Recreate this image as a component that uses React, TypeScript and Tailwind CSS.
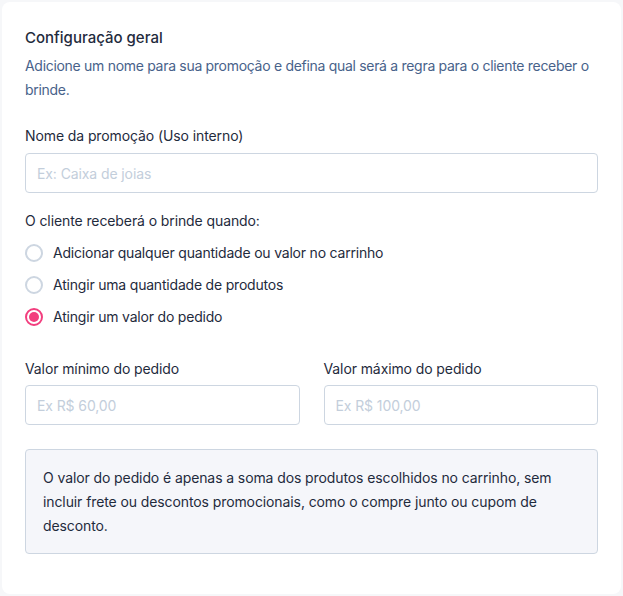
import React, { useState } from 'react';

type Rule = 'any' | 'quantity' | 'value';

const options: { value: Rule; label: string }[] = [
    { value: 'any', label: 'Adicionar qualquer quantidade ou valor no carrinho' },
    { value: 'quantity', label: 'Atingir uma quantidade de produtos' },
    { value: 'value', label: 'Atingir um valor do pedido' },
];

const App: React.FC = () => {
    const [rule, setRule] = useState<Rule>('value');

    return (
        <div className="min-h-[596px] bg-[#f6f7f9] p-[2px] font-['Inter',sans-serif] text-[14px] tracking-[-0.1px] text-[#1f2b3d]">
            <div className="rounded-[8px] bg-white px-[23px] pt-[25px] pb-[40px]">
                <h2 className="text-[15px] font-medium leading-[22px] tracking-normal text-[#1f2b3d]">Configuração geral</h2>
                <p className="mt-[5px] leading-[24px] tracking-[-0.3px] text-[#48628a]">
                    Adicione um nome para sua promoção e defina qual será a regra para o cliente receber o brinde.
                </p>

                <label htmlFor="name" className="mt-[23px] block leading-[22px]">
                    Nome da promoção (Uso interno)
                </label>
                <input
                    id="name"
                    type="text"
                    placeholder="Ex: Caixa de joias"
                    className="mt-[6px] block h-[40px] w-full rounded-[4px] border border-[#cdd6e1] px-[11px] text-[14px] outline-none placeholder:text-[#c3cedb]"
                />

                <p className="mt-[17px] leading-[22px]">O cliente receberá o brinde quando:</p>
                <div className="mt-[5px] flex flex-col">
                    {options.map((o) => (
                        <label key={o.value} className="flex h-[32px] cursor-pointer items-center gap-[10px]">
                            <input
                                type="radio"
                                name="rule"
                                className="sr-only"
                                checked={rule === o.value}
                                onChange={() => setRule(o.value)}
                            />
                            {rule === o.value ? (
                                <span className="flex h-[18px] w-[18px] items-center justify-center rounded-full border-[2px] border-[#f23e7e]">
                                    <span className="h-[10px] w-[10px] rounded-full bg-[#f23e7e]" />
                                </span>
                            ) : (
                                <span className="h-[18px] w-[18px] rounded-full border-[2px] border-[#cdd6e1]" />
                            )}
                            <span className="leading-[22px] tracking-[-0.2px]">{o.label}</span>
                        </label>
                    ))}
                </div>

                <div className="mt-[25px] grid grid-cols-2 gap-[24px]">
                    <div>
                        <label htmlFor="min" className="block leading-[22px]">Valor mínimo do pedido</label>
                        <input
                            id="min"
                            type="text"
                            placeholder="Ex R$ 60,00"
                            className="mt-[5px] block h-[40px] w-full rounded-[4px] border border-[#cdd6e1] px-[11px] text-[14px] outline-none placeholder:text-[#c3cedb]"
                        />
                    </div>
                    <div>
                        <label htmlFor="max" className="block leading-[22px]">Valor máximo do pedido</label>
                        <input
                            id="max"
                            type="text"
                            placeholder="Ex R$ 100,00"
                            className="mt-[5px] block h-[40px] w-full rounded-[4px] border border-[#cdd6e1] px-[11px] text-[14px] outline-none placeholder:text-[#c3cedb]"
                        />
                    </div>
                </div>

                <div className="mt-[24px] rounded-[4px] border border-[#cdd6e1] bg-[#f5f6fa] px-[17px] pt-[16px] pb-[15px] leading-[24px]">
                    O valor do pedido é apenas a soma dos produtos escolhidos no carrinho, sem incluir frete ou descontos
                    promocionais, como o compre junto ou cupom de desconto.
                </div>
            </div>
        </div>
    );
};

export default App;
